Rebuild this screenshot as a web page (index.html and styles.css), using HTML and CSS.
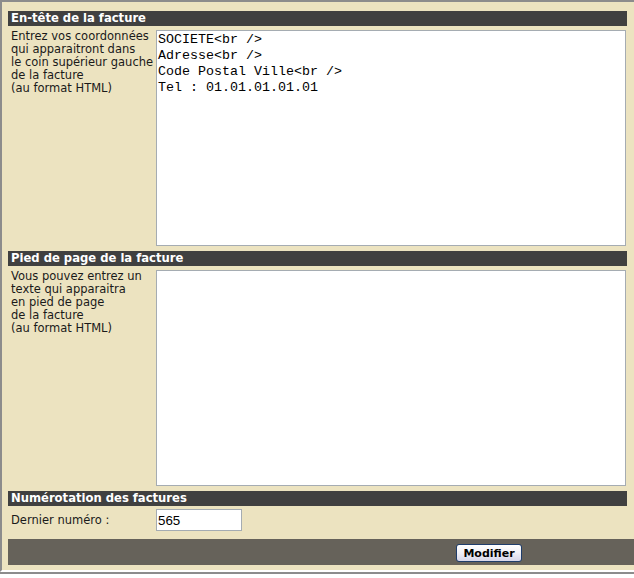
FILE: index.html
```html
<!DOCTYPE html>
<html lang="fr">
<head>
<meta charset="utf-8">
<title>Facture</title>
<link rel="stylesheet" href="styles.css">
</head>
<body>
<div class="frame">
  <div class="bar">En-tête de la facture</div>
  <div class="row">
    <div class="label">Entrez vos coordonnées<br>qui apparaitront dans<br>le coin supérieur gauche<br>de la facture<br>(au format HTML)</div>
    <textarea class="area">SOCIETE&lt;br /&gt;
Adresse&lt;br /&gt;
Code Postal Ville&lt;br /&gt;
Tel : 01.01.01.01.01</textarea>
  </div>
  <div class="bar gap">Pied de page de la facture</div>
  <div class="row">
    <div class="label">Vous pouvez entrez un<br>texte qui apparaitra<br>en pied de page<br>de la facture<br>(au format HTML)</div>
    <textarea class="area"></textarea>
  </div>
  <div class="bar gap">Numérotation des factures</div>
  <div class="row num-row">
    <div class="label">Dernier numéro :</div>
    <input class="num" type="text" value="565">
  </div>
  <div class="footer">
    <button class="btn" type="button">Modifier</button>
  </div>
</div>
<div class="rule"></div>
</body>
</html>
```
FILE: styles.css
```css
html, body {
  margin: 0;
  padding: 0;
  background: #ffffff;
  overflow: hidden;
}

.frame {
  box-sizing: border-box;
  width: 634px;
  background: #ece3c0;
  border-top: 2px solid #8c8c8c;
  border-left: 2px solid #8c8c8c;
  border-bottom: 2px solid #ffffff;
  padding: 9px 0 5px 6px;
  font-family: "DejaVu Sans", Verdana, sans-serif;
  font-size: 11.5px;
  color: #1a1a1a;
}

.bar {
  width: 619px;
  box-sizing: border-box;
  height: 15px;
  line-height: 15px;
  padding-left: 3px;
  background: #404040;
  color: #ffffff;
  font-weight: bold;
  font-size: 11.6px;
  white-space: nowrap;
}

.bar.gap {
  margin-top: 5px;
}

.row {
  display: flex;
  width: 619px;
  margin-top: 4px;
}

.label {
  box-sizing: border-box;
  width: 148px;
  flex: none;
  padding-left: 3px;
  line-height: 13px;
  white-space: nowrap;
}

.area {
  box-sizing: border-box;
  width: 470px;
  height: 216px;
  margin: 0;
  border: 1px solid #a5acb2;
  padding: 1px;
  background: #ffffff;
  font-family: "Liberation Mono", "Courier New", monospace;
  font-size: 13.33px;
  line-height: 16px;
  color: #000000;
  resize: none;
  overflow: hidden;
}

.num-row {
  margin-top: 3px;
  align-items: center;
}

.num {
  box-sizing: border-box;
  width: 86px;
  height: 22px;
  margin: 0;
  border: 1px solid #a5acb2;
  padding: 0 1px;
  background: #ffffff;
  font-family: "Liberation Sans", Arial, sans-serif;
  font-size: 13.33px;
  color: #000000;
}

.footer {
  box-sizing: border-box;
  margin-top: 8px;
  height: 26px;
  background: #66625a;
  padding: 5px 0 0 448px;
}

.btn {
  box-sizing: border-box;
  width: 66px;
  height: 18px;
  margin: 0;
  padding: 0;
  border: 1px solid #1f3d6b;
  border-radius: 3px;
  background: linear-gradient(#ffffff 0%, #f2f2f8 45%, #d6d6ea 100%);
  font-family: "DejaVu Sans", Verdana, sans-serif;
  font-size: 11px;
  font-weight: bold;
  color: #000000;
  line-height: 15px;
}

.rule {
  height: 2px;
  width: 634px;
  background: #8c8c8c;
}
```
